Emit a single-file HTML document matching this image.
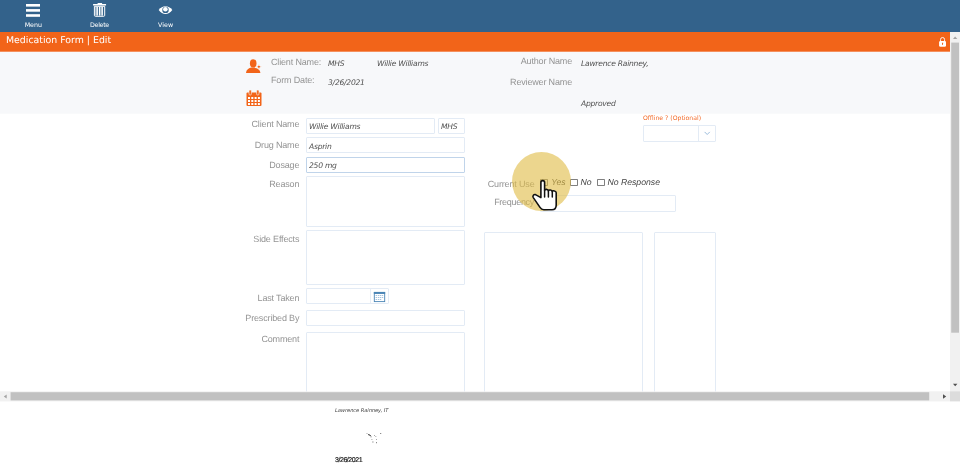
<!DOCTYPE html>
<html><head><meta charset="utf-8">
<style>
html,body{margin:0;padding:0;}
html{background:linear-gradient(to bottom,#33628b 0,#33628b 32px,#f26419 32px,#f26419 51px,#f4905d 51px,#f4905d 52px,#f7f8fa 52px,#f7f8fa 113px,#f9fafb 113px,#f9fafb 114px,#fff 114px,#fff 100%) no-repeat #fff;width:960px;height:469px;overflow:hidden;}
body{text-rendering:geometricPrecision;will-change:transform;width:960px;height:469px;position:relative;overflow:hidden;background:transparent;font-family:"Liberation Sans",sans-serif;}
.abs{position:absolute;}
#top{left:0;top:0;width:960px;height:32px;background:#33628b;}
#obar{left:0;top:32px;width:950px;height:19px;background:#f26419;}
#obar .t{position:absolute;left:6px;top:2.8px;font-size:9.4px;line-height:12px;color:#fff;font-family:"DejaVu Sans","Liberation Sans",sans-serif;white-space:nowrap;}
#hdr{left:0;top:52px;width:950px;height:61px;background:#f7f8fa;}
.tl{position:absolute;color:#fff;font-size:6.3px;line-height:8px;font-family:"DejaVu Sans","Liberation Sans",sans-serif;text-align:center;width:40px;top:20px;}
.lbl{position:absolute;color:#949494;font-size:9px;letter-spacing:-0.16px;line-height:10px;white-space:nowrap;text-align:right;}
.val{position:absolute;color:#505050;font-size:7.6px;letter-spacing:-0.25px;line-height:9px;font-style:italic;white-space:nowrap;font-family:"DejaVu Sans","Liberation Sans",sans-serif;}
.box{position:absolute;border-radius:1px;border:1px solid #e3ebf5;background:#fff;box-sizing:border-box;}
.cb{position:absolute;width:8px;height:7px;border:1px solid #808080;box-sizing:border-box;background:#fff;border-radius:0.8px;}
.ct{position:absolute;font-size:8.7px;line-height:10px;font-style:italic;color:#444;white-space:nowrap;}
</style></head><body>
<div id="top" class="abs">
  <svg class="abs" style="left:0;top:0" width="200" height="32" viewBox="0 0 200 32">
    <g fill="#fff">
      <rect x="26" y="4" width="14" height="2.6"/><rect x="26" y="9.1" width="14" height="2.6"/><rect x="26" y="14.2" width="14" height="2.6"/>
      <rect x="97.5" y="3" width="4.7" height="1.2" rx="0.4"/>
      <rect x="93" y="4.1" width="13.1" height="1.4" rx="0.3"/>
      <rect x="96.4" y="6.8" width="1.5" height="8.8"/><rect x="98.9" y="6.8" width="1.2" height="8.8"/><rect x="101.4" y="6.8" width="1.5" height="8.8"/>
      <rect x="95" y="6.8" width="1.4" height="8.8" opacity="0.45"/><rect x="100.1" y="6.8" width="1.3" height="8.8" opacity="0.45"/>
    </g>
    <path d="M94.4 6.3h10.3v9a1 1 0 0 1-1 1h-8.3a1 1 0 0 1-1-1z" fill="none" stroke="#fff" stroke-width="1"/>
    <path d="M158.7 10C160.6 7.4 163 6.2 165.5 6.2S170.4 7.4 172.3 10C170.4 12.7 168 13.9 165.5 13.9S160.6 12.7 158.7 10Z" fill="#fff"/>
    <circle cx="165.5" cy="9.9" r="3.2" fill="#33628b"/><circle cx="165.4" cy="9.2" r="2.3" fill="#fff"/>
  </svg>
  <div class="tl" style="left:13.3px;top:22px">Menu</div>
  <div class="tl" style="left:79.5px;top:22px;letter-spacing:-0.3px">Delete</div>
  <div class="tl" style="left:145.6px;top:22px">View</div>
</div>
<div id="obar" class="abs"><div class="t">Medication Form | Edit</div>
  <svg class="abs" style="left:930px;top:0px" width="20" height="20" viewBox="930 32 20 20"><path d="M940.55 41.5V39.5a2 2 0 0 1 4 0V41.5" fill="none" stroke="#fff" stroke-width="0.9"/><rect x="939.1" y="40.9" width="6.9" height="5.9" rx="1.3" fill="#fff"/><path d="M941.9 42.8h1.3l-0.3 2.1h-0.7z" fill="#f26419"/></svg>
</div>
<div id="hdr" class="abs"></div>

<!-- header icons -->
<svg class="abs" style="left:244px;top:56px" width="20" height="20" viewBox="244 56 20 20"><path d="M246 72.9c0.3-3.3 3-5.3 7.2-5.3s6.9 2 7.2 5.3z" fill="#f26419"/><ellipse cx="253.2" cy="63.4" rx="3.3" ry="4.1" fill="#f26419"/><path d="M258.9 64.2L259.7 66L261.5 66.8L259.7 67.6L258.9 69.4L258.1 67.6L256.3 66.8L258.1 66z" fill="#f26419" stroke="#f7f8fa" stroke-width="0.7"/></svg>
<svg class="abs" style="left:246px;top:90px" width="16" height="17" viewBox="0 0 16 17"><rect x="0.5" y="2.5" width="15" height="13.5" rx="1" fill="#f26419"/><rect x="3" y="0" width="2.4" height="5" rx="1" fill="#f26419" stroke="#f7f8fa" stroke-width="0.6"/><rect x="10.6" y="0" width="2.4" height="5" rx="1" fill="#f26419" stroke="#f7f8fa" stroke-width="0.6"/>
<g fill="#fff"><rect x="2" y="7" width="2" height="2"/><rect x="5.3" y="7" width="2" height="2"/><rect x="8.6" y="7" width="2" height="2"/><rect x="11.9" y="7" width="2" height="2"/><rect x="2" y="10" width="2" height="2"/><rect x="5.3" y="10" width="2" height="2"/><rect x="8.6" y="10" width="2" height="2"/><rect x="11.9" y="10" width="2" height="2"/><rect x="2" y="13" width="2" height="2"/><rect x="5.3" y="13" width="2" height="2"/><rect x="8.6" y="13" width="2" height="2"/><rect x="11.9" y="13" width="2" height="2"/></g></svg>

<div class="lbl" style="left:271px;top:57px;text-align:left">Client Name:</div>
<div class="lbl" style="left:271px;top:75px;text-align:left">Form Date:</div>
<div class="val" style="left:328px;top:59px">MHS</div>
<div class="val" style="left:377px;top:59px">Willie Williams</div>
<div class="val" style="left:328px;top:78px">3/26/2021</div>
<div class="lbl" style="left:472px;width:100px;top:56.4px">Author Name</div>
<div class="lbl" style="left:472px;width:100px;top:77px">Reviewer Name</div>
<div class="val" style="left:581px;top:59px">Lawrence Rainney,</div>
<div class="val" style="left:581px;top:99.4px">Approved</div>

<!-- left form -->
<div class="lbl" style="left:199.3px;width:100px;top:119px">Client Name</div>
<div class="box" style="left:306px;top:118px;width:129px;height:16px"></div>
<div class="val" style="left:309px;top:122px">Willie Williams</div>
<div class="box" style="left:438px;top:118px;width:27px;height:16px"></div>
<div class="val" style="left:441px;top:122px">MHS</div>

<div class="lbl" style="left:199.3px;width:100px;top:140px">Drug Name</div>
<div class="box" style="left:306px;top:137px;width:159px;height:16px"></div>
<div class="val" style="left:309px;top:142px">Asprin</div>

<div class="lbl" style="left:199.3px;width:100px;top:159.5px">Dosage</div>
<div class="box" style="left:306px;top:157px;width:159px;height:16px;border-color:#c0d4ea"></div>
<div class="val" style="left:309px;top:161px">250 mg</div>

<div class="lbl" style="left:199.3px;width:100px;top:178.7px">Reason</div>
<div class="box" style="left:306px;top:176px;width:159px;height:51px"></div>

<div class="lbl" style="left:199.3px;width:100px;top:234.4px">Side Effects</div>
<div class="box" style="left:306px;top:230px;width:159px;height:55px"></div>

<div class="lbl" style="left:199.3px;width:100px;top:292.6px">Last Taken</div>
<div class="box" style="left:306px;top:288px;width:83px;height:16px"></div>
<div class="abs" style="left:370px;top:289px;width:1px;height:14px;background:#e8eef6"></div>
<svg class="abs" style="left:373px;top:291px" width="13" height="12" viewBox="373 291 13 12"><rect x="374.3" y="292.4" width="10.4" height="9.2" fill="#fff" stroke="#4a85b5" stroke-width="0.9"/><rect x="373.85" y="291.95" width="11.3" height="2" fill="#4a85b5"/><g fill="#8fb4d6"><rect x="375.6" y="295.1" width="1.4" height="0.8"/><rect x="377.8" y="295.1" width="1.4" height="0.8"/><rect x="379.8" y="295.1" width="1.4" height="0.8"/><rect x="381.8" y="295.1" width="1.4" height="0.8"/><rect x="375.6" y="297" width="1.4" height="0.8"/><rect x="377.8" y="297" width="1.4" height="0.8"/><rect x="379.8" y="297" width="1.4" height="0.8"/><rect x="381.8" y="297" width="1.4" height="0.8"/><rect x="375.6" y="299" width="1.4" height="0.8"/><rect x="377.8" y="299" width="1.4" height="0.8"/><rect x="379.8" y="299" width="1.4" height="0.8"/></g></svg>

<div class="lbl" style="left:199.3px;width:100px;top:312.6px">Prescribed By</div>
<div class="box" style="left:306px;top:310px;width:159px;height:16px"></div>

<div class="lbl" style="left:199.3px;width:100px;top:334.2px">Comment</div>
<div class="box" style="left:306px;top:332px;width:159px;height:68px"></div>

<!-- right -->
<div class="abs" style="left:643px;top:115.1px;font-size:6.15px;line-height:8px;color:#f36c2b;font-family:'DejaVu Sans','Liberation Sans',sans-serif;white-space:nowrap">Offline ? (Optional)</div>
<div class="box" style="left:643px;top:125px;width:73px;height:17px"></div>
<div class="abs" style="left:698px;top:126px;width:1px;height:15px;background:#e3ebf5"></div>
<svg class="abs" style="left:700px;top:128px" width="14" height="10" viewBox="700 128 14 10"><path d="M704.6 131.9L707.2 134.5L709.8 131.9" fill="none" stroke="#8ab0d4" stroke-width="0.85"/></svg>

<div class="box" style="left:540px;top:195px;width:136px;height:17px"></div>
<div class="box" style="left:484px;top:232px;width:159px;height:168px"></div>
<div class="box" style="left:654px;top:232px;width:62px;height:168px"></div>

<div class="lbl" style="left:434.5px;width:100px;top:179px">Current Use</div>
<div class="lbl" style="left:434px;width:100px;top:197px;letter-spacing:-0.3px">Frequency</div>

<div class="cb" style="left:540px;top:178.5px"></div>
<div class="cb" style="left:570px;top:178.5px"></div>
<div class="cb" style="left:597px;top:178.5px"></div>
<div class="ct" style="left:551.2px;top:177px">Yes</div>
<div class="ct" style="left:580.6px;top:177px">No</div>
<div class="ct" style="left:607.4px;top:177px">No Response</div>

<!-- highlight + cursor -->
<div class="abs" style="left:511.6px;top:152.1px;width:59px;height:59px;border-radius:50%;background:rgba(223,187,67,0.6)"></div>
<svg class="abs" style="left:525px;top:172px" width="40" height="44" viewBox="525 172 40 44">
<path d="M540.9 197.6V182.5a1.85 1.85 0 0 1 3.7 0V190.4c0.3-1.5 3.5-1.5 3.8 0.5c0.3-1.3 3.6-1.1 3.9 0.6c0.4-1.1 3.9-0.8 3.9 1.2V205c0 3-1.6 4.7-4.2 4.7H543.8c-1.6 0-2.8-0.8-3.8-2.3L533.3 197.6c-1-1.6 0.2-3.4 2.2-3z" fill="#fff" stroke="#111" stroke-width="1.6" stroke-linejoin="round"/>
<path d="M544.6 190.4V197M548.4 191V197M552.3 191.6V197" stroke="#111" stroke-width="1.5" stroke-linecap="round" fill="none"/>
</svg>

<!-- scrollbars -->
<svg class="abs" style="left:0;top:0;z-index:5" width="960" height="469" viewBox="0 0 960 469">
<rect x="950" y="32" width="10" height="359.3" fill="#f1f1f1"/>
<rect x="951.2" y="42.6" width="7.8" height="290.1" fill="#c1c1c1"/>
<path d="M953 38.9L955.15 36.6L957.3 38.9z" fill="#a3a3a3"/>
<path d="M953 383.8L955.2 386.2L957.4 383.8z" fill="#505050"/>
<rect x="0" y="391.3" width="950" height="10.1" fill="#f1f1f1"/>
<rect x="10.6" y="392.2" width="918.6" height="8.2" fill="#c1c1c1"/>
<path d="M6.7 394.4L3.8 396.5L6.7 398.6z" fill="#a3a3a3"/>
<path d="M943 394.2L946.2 396.45L943 398.7z" fill="#505050"/>
<rect x="950" y="391.3" width="10" height="10.1" fill="#dcdcdc"/>
</svg>

<!-- bottom -->
<div class="abs" style="left:335px;top:406.6px;font-size:5.2px;line-height:8px;font-style:italic;color:#444;font-family:'DejaVu Sans','Liberation Sans',sans-serif;white-space:nowrap;letter-spacing:-0.1px">Lawrence Rainney, IT</div>
<svg class="abs" style="left:364px;top:430px" width="20" height="16" viewBox="364 430 20 16"><g fill="#222">
<rect x="366.5" y="433" width="1" height="1" opacity="0.4"/><rect x="368.3" y="434" width="1.2" height="1.2" opacity="1"/><rect x="369.5" y="435" width="1.2" height="1" opacity="1"/><rect x="370.5" y="436.3" width="1" height="1" opacity="0.65"/>
<rect x="374" y="435" width="1" height="1" opacity="0.4"/><rect x="375.3" y="436" width="1" height="1" opacity="0.4"/><rect x="380.2" y="433" width="1" height="1" opacity="0.65"/>
<rect x="371.4" y="439" width="1" height="1" opacity="0.4"/><rect x="376" y="439" width="1" height="1" opacity="0.4"/><rect x="372.4" y="441.5" width="1" height="1" opacity="0.65"/><rect x="376" y="442.2" width="1" height="1" opacity="0.65"/>
</g></svg>
<div class="abs" style="left:335px;top:455.6px;font-size:7px;line-height:9px;color:#1a1a1a;-webkit-text-stroke:0.2px #1a1a1a;letter-spacing:-0.45px;white-space:nowrap">3/26/2021</div>
</body></html>
